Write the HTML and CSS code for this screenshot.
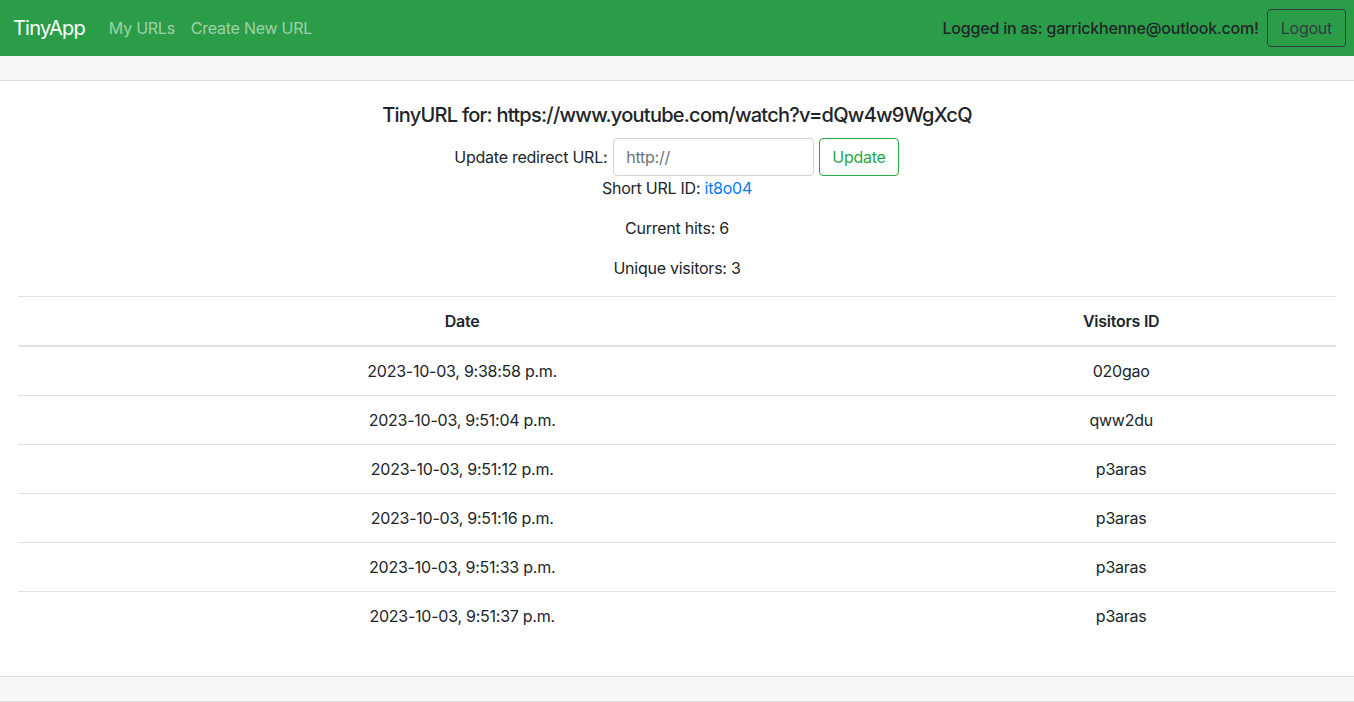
FILE: index.html
```html
<!DOCTYPE html>
<html>
<head>
<meta charset="utf-8">
<link rel="stylesheet" href="styles.css">
</head>
<body>
<nav class="navbar">
  <div class="nav-left">
    <a class="brand" href="#">TinyApp</a>
    <a class="nav-link" href="#">My URLs</a>
    <a class="nav-link" href="#">Create New URL</a>
  </div>
  <div class="nav-right">
    <span class="user">Logged in as: garrickhenne@outlook.com!</span>
    <button class="btn-logout">Logout</button>
  </div>
</nav>
<div class="card">
  <div class="card-header"></div>
  <div class="card-body">
    <h5 class="title">TinyURL for: https://www.youtube.com/watch?v=dQw4w9WgXcQ</h5>
    <form class="update-form">
      <label class="label">Update redirect URL:</label>
      <input class="input" type="text" placeholder="http://">
      <button type="button" class="btn-update">Update</button>
    </form>
    <p class="short">Short URL ID: <a href="#">it8o04</a></p>
    <p class="stat">Current hits: 6</p>
    <p class="stat">Unique visitors: 3</p>
    <table class="table">
      <thead>
        <tr><th class="col-date">Date</th><th>Visitors ID</th></tr>
      </thead>
      <tbody>
        <tr><td>2023-10-03, 9:38:58 p.m.</td><td>020gao</td></tr>
        <tr><td>2023-10-03, 9:51:04 p.m.</td><td>qww2du</td></tr>
        <tr><td>2023-10-03, 9:51:12 p.m.</td><td>p3aras</td></tr>
        <tr><td>2023-10-03, 9:51:16 p.m.</td><td>p3aras</td></tr>
        <tr><td>2023-10-03, 9:51:33 p.m.</td><td>p3aras</td></tr>
        <tr><td>2023-10-03, 9:51:37 p.m.</td><td>p3aras</td></tr>
      </tbody>
    </table>
  </div>
  <div class="card-footer"></div>
</div>
</body>
</html>
```
FILE: styles.css
```css
* { box-sizing: border-box; }
html, body {
  margin: 0;
  padding: 0;
  font-family: Inter, "Liberation Sans", Arial, sans-serif;
  font-size: 16px;
  line-height: 1.5;
  letter-spacing: -0.25px;
  color: #212529;
  background: #fff;
}
.navbar {
  height: 56px;
  background: #2b9d48;
  display: flex;
  align-items: center;
  justify-content: space-between;
  padding: 0 8px 0 13px;
}
.nav-left { display: flex; align-items: center; }
.brand {
  color: #fff;
  font-size: 20px;
  letter-spacing: -0.8px;
  text-decoration: none;
  margin-right: 24px;
}
.nav-link {
  color: rgba(255,255,255,0.55);
  text-decoration: none;
  margin-right: 16px;
}
.nav-right { display: flex; align-items: center; }
.user {
  margin-right: 8px;
  color: #212529;
  font-weight: 500;
  letter-spacing: -0.2px;
}
.btn-logout {
  font: inherit;
  letter-spacing: inherit;
  color: #343a40;
  background: transparent;
  border: 1px solid #343a40;
  border-radius: 4px;
  height: 38px;
  padding: 0 13px;
}
.card-header {
  height: 25px;
  background: #f7f7f7;
  border-bottom: 1px solid #dcdcdc;
}
.card-body {
  padding: 22px 18px 36px;
  text-align: center;
}
.title {
  font-size: 20px;
  font-weight: 500;
  letter-spacing: -0.75px;
  margin: 0 0 11px;
  line-height: 1.2;
}
.update-form {
  display: flex;
  justify-content: center;
  align-items: center;
  height: 38px;
  margin-left: -1px;
}
.label { margin-right: 6px; }
.input {
  width: 201px;
  height: 38px;
  padding: 6px 12px;
  font: inherit;
  letter-spacing: inherit;
  color: #495057;
  border: 1px solid #ced4da;
  border-radius: 4px;
}
.input::placeholder { color: #6c757d; }
.btn-update {
  font: inherit;
  letter-spacing: inherit;
  color: #28a745;
  background: #fff;
  border: 1px solid #28a745;
  border-radius: 4px;
  height: 38px;
  padding: 0 12px;
  margin-left: 5px;
}
.short { margin: 0 0 16px; }
.short a { color: #007bff; text-decoration: none; }
.stat { margin: 0 0 16px; }
.table {
  width: 100%;
  border-collapse: collapse;
  margin-top: 4px;
}
.table th, .table td {
  padding: 12px;
  border-top: 1px solid #dee2e6;
  text-align: center;
}
.table thead th {
  border-bottom: 2px solid #dee2e6;
  font-weight: 600;
}
.col-date { width: 67.4%; }
.card-footer {
  height: 26px;
  background: #f7f7f7;
  border-top: 1px solid #dcdcdc;
  border-bottom: 1px solid #dcdcdc;
}
```
